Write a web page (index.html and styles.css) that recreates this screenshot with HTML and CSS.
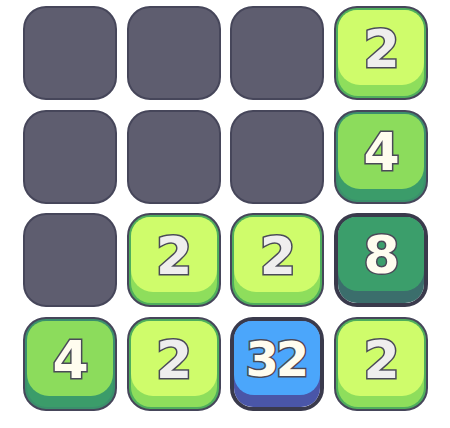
FILE: index.html
```html
<!DOCTYPE html>
<html>
<head>
<meta charset="utf-8">
<link rel="stylesheet" href="styles.css">
</head>
<body>
<div class="board">
  <div class="tile empty"></div>
  <div class="tile empty"></div>
  <div class="tile empty"></div>
  <div class="tile t2"><div class="base"><div class="face"><span class="num">2</span></div></div></div>

  <div class="tile empty"></div>
  <div class="tile empty"></div>
  <div class="tile empty"></div>
  <div class="tile t4"><div class="base"><div class="face"><span class="num">4</span></div></div></div>

  <div class="tile empty"></div>
  <div class="tile t2"><div class="base"><div class="face"><span class="num">2</span></div></div></div>
  <div class="tile t2"><div class="base"><div class="face"><span class="num">2</span></div></div></div>
  <div class="tile t8"><div class="base"><div class="face"><span class="num">8</span></div></div></div>

  <div class="tile t4"><div class="base"><div class="face"><span class="num">4</span></div></div></div>
  <div class="tile t2"><div class="base"><div class="face"><span class="num">2</span></div></div></div>
  <div class="tile t32"><div class="base"><div class="face"><span class="num small">32</span></div></div></div>
  <div class="tile t2"><div class="base"><div class="face"><span class="num">2</span></div></div></div>
</div>
</body>
</html>
```

FILE: styles.css
```css
html, body {
  margin: 0;
  padding: 0;
  background: #ffffff;
}
body {
  width: 450px;
  height: 428px;
  overflow: hidden;
  font-family: "DejaVu Sans", sans-serif;
}
.board {
  display: grid;
  grid-template-columns: repeat(4, 94px);
  grid-template-rows: repeat(4, 94px);
  gap: 9.7px;
  padding: 6px 0 0 23px;
}
.tile {
  box-sizing: border-box;
  width: 94px;
  height: 94px;
  border-radius: 23px;
  border: 2px solid #46465a;
  display: flex;
}
.empty {
  background: #5e5d6f;
}
.base {
  flex: 1;
  display: flex;
  flex-direction: column;
  border-radius: 20px;
  padding-bottom: 11px;
}
.face {
  flex: 1;
  display: flex;
  align-items: center;
  justify-content: center;
  border-radius: 19px 19px 22px 22px;
}
.num {
  font-weight: bold;
  font-size: 52px;
  line-height: 1;
  color: #efeeee;
  -webkit-text-stroke: 3px #4a4a58;
  paint-order: stroke fill;
  margin-top: 2px;
  letter-spacing: -1px;
}
.num.small {
  font-size: 48px;
  letter-spacing: -3px;
  margin-top: 2px;
  margin-left: -3px;
}

/* 2 */
.t2 {
  background: #4fae5c;
  padding: 2px;
}
.t2 .base {
  background: #8ede5c;
}
.t2 .face {
  background: #cffc6b;
}

/* 4 */
.t4 {
  background: #3b8f6c;
  padding: 2px;
}
.t4 .base {
  background: #3b9c6a;
}
.t4 .face {
  background: #8cdc5c;
}
.t4 .num {
  color: #fffdef;
}

/* 8 */
.t8 {
  border: 4px solid #3a3a4c;
}
.t8 .base {
  background: #3b6e6c;
  border-radius: 19px;
  padding-bottom: 12px;
}
.t8 .face {
  background: #3b9e6b;
  border-radius: 18px 18px 20px 20px;
}
.t8 .num {
  color: #fffdef;
}

/* 32 */
.t32 {
  border: 4px solid #3a3a4c;
}
.t32 .base {
  background: #4a56a8;
  border-radius: 19px;
  padding-bottom: 12px;
}
.t32 .face {
  background: #4ba6fb;
  border-radius: 18px 18px 20px 20px;
}
.t32 .num {
  color: #fffdef;
}
```
